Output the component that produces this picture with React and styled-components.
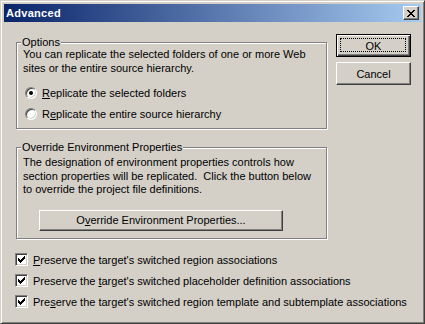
import React from "react";
import styled, { createGlobalStyle, css } from "styled-components";

const Global = createGlobalStyle`
  html, body { margin: 0; padding: 0; background: #d4d0c8; }
  body { font-family: "Liberation Sans", Arial, sans-serif; font-size: 11px; color: #000; }
`;

const Window = styled.div`
  box-sizing: border-box;
  width: 425px;
  height: 324px;
  background: #d4d0c8;
  border: 1px solid;
  border-color: #d4d0c8 #404040 #404040 #d4d0c8;
  box-shadow: inset 1px 1px #fff, inset -1px -1px #808080;
  padding: 3px;
  display: flex;
  flex-direction: column;
`;

const TitleBar = styled.div`
  height: 18px;
  display: flex;
  align-items: center;
  padding-left: 2px;
  background: linear-gradient(to right, #0a246a, #a6caf0);
`;

const Title = styled.span`
  flex: 1;
  color: #fff;
  font-weight: bold;
  font-size: 11px;
  letter-spacing: 0.3px;
`;

const bevel = css`
  background: #d4d0c8;
  border: 1px solid;
  border-color: #fff #404040 #404040 #fff;
  box-shadow: inset -1px -1px #808080;
`;

const CloseButton = styled.div`
  ${bevel};
  box-sizing: border-box;
  width: 16px;
  height: 14px;
  margin-right: 2px;
  display: flex;
  align-items: center;
  justify-content: center;
  padding-right: 1px;
`;

const Content = styled.div`
  flex: 1;
  display: flex;
  gap: 9px;
  padding: 12px 10px 0 11px;
`;

const LeftColumn = styled.div`
  width: 312px;
  display: flex;
  flex-direction: column;
`;

const RightColumn = styled.div`
  width: 75px;
  display: flex;
  flex-direction: column;
  gap: 5px;
`;

const Group = styled.div`
  position: relative;
  box-sizing: border-box;
  margin-left: 1px;
  margin-top: ${(p) => p.$top}px;
  height: ${(p) => p.$height}px;
  border: 1px solid #808080;
  box-shadow: inset 1px 1px #fff, 1px 1px #fff;
  padding: ${(p) => p.$padTop}px 6px 0 6px;
`;

const Legend = styled.span`
  position: absolute;
  top: -7px;
  left: 4px;
  padding: 0 1px;
  line-height: 13px;
  background: #d4d0c8;
`;

const Para = styled.div`
  line-height: 13.5px;
  white-space: nowrap;
`;

const RadioList = styled.div`
  margin-top: 7px;
  margin-left: 2px;
`;

const OptionRow = styled.label`
  height: 21px;
  display: flex;
  align-items: center;
  gap: 5px;
  white-space: nowrap;
`;

const Radio = styled.span`
  position: relative;
  box-sizing: border-box;
  width: 12px;
  height: 12px;
  border-radius: 50%;
  background: #fff;
  border: 1px solid;
  border-color: #808080 #fff #fff #808080;
  box-shadow: inset 1px 1px #404040, inset -1px -1px #d4d0c8;
  ${(p) =>
    p.$checked &&
    css`
      &::after {
        content: "";
        position: absolute;
        left: 3px;
        top: 3px;
        width: 4px;
        height: 4px;
        border-radius: 50%;
        background: #000;
      }
    `}
`;

const CheckList = styled.div`
  margin-top: 10px;
`;

const CheckBox = styled.span`
  flex: none;
  box-sizing: border-box;
  width: 13px;
  height: 13px;
  background: #fff;
  border: 1px solid;
  border-color: #808080 #fff #fff #808080;
  box-shadow: inset 1px 1px #404040, inset -1px -1px #d4d0c8;
  display: flex;
  align-items: center;
  justify-content: center;
`;

const PushButton = styled.button`
  ${bevel};
  box-sizing: border-box;
  font: inherit;
  color: #000;
  width: ${(p) => p.$width}px;
  height: ${(p) => p.$height}px;
  padding: 0;
  display: flex;
  align-items: center;
  justify-content: center;
  ${(p) =>
    p.$default &&
    css`
      position: relative;
      border: 1px solid #000;
      box-shadow: inset 1px 1px #fff, inset -1px -1px #404040,
        inset -2px -2px #808080;
      &::after {
        content: "";
        position: absolute;
        inset: 3px 4px 4px 3px;
        border: 1px dotted #000;
      }
    `}
`;

const EnvButton = styled(PushButton)`
  margin-left: 16px;
  margin-top: 13px;
`;

const CheckMark = () => (
  <svg width="7" height="7" viewBox="0 0 7 7" shapeRendering="crispEdges">
    <path
      fill="#000"
      d="M6 0h1v1H6z M5 1h2v1H5z M0 2h1v1H0z M4 2h3v1H4z M0 3h2v1H0z M3 3h3v1H3z M0 4h5v1H0z M1 5h3v1H1z M2 6h1v1H2z"
    />
  </svg>
);

const CloseGlyph = () => (
  <svg width="8" height="7" viewBox="0 0 8 7" shapeRendering="crispEdges">
    <path
      fill="#000"
      d="M0 0h2v1H0z M6 0h2v1H6z M1 1h2v1H1z M5 1h2v1H5z M2 2h4v1H2z M3 3h2v1H3z M2 4h4v1H2z M1 5h2v1H1z M5 5h2v1H5z M0 6h2v1H0z M6 6h2v1H6z"
    />
  </svg>
);

const checks = [
  { pre: "", key: "P", post: "reserve the target's switched region associations" },
  { pre: "Preserve the ", key: "t", post: "arget's switched placeholder definition associations" },
  { pre: "Pre", key: "s", post: "erve the target's switched region template and subtemplate associations" },
];

export default function App() {
  return (
    <>
      <Global />
      <Window>
        <TitleBar>
          <Title>Advanced</Title>
          <CloseButton>
            <CloseGlyph />
          </CloseButton>
        </TitleBar>
        <Content>
          <LeftColumn>
            <Group $top={8} $height={87} $padTop={5}>
              <Legend>Options</Legend>
              <Para>
                You can replicate the selected folders of one or more Web
                <br />
                sites or the entire source hierarchy.
              </Para>
              <RadioList>
                <OptionRow>
                  <Radio $checked />
                  <span>
                    <u>R</u>eplicate the selected folders
                  </span>
                </OptionRow>
                <OptionRow>
                  <Radio />
                  <span>
                    R<u>e</u>plicate the entire source hierarchy
                  </span>
                </OptionRow>
              </RadioList>
            </Group>

            <Group $top={18} $height={92} $padTop={8}>
              <Legend>Override Environment Properties</Legend>
              <Para>
                The designation of environment properties controls how
                <br />
                section properties will be replicated.&nbsp; Click the button below
                <br />
                to override the project file definitions.
              </Para>
              <EnvButton $width={244} $height={21}>
                O<u>v</u>erride Environment Properties...
              </EnvButton>
            </Group>

            <CheckList>
              {checks.map((c) => (
                <OptionRow key={c.post}>
                  <CheckBox>
                    <CheckMark />
                  </CheckBox>
                  <span>
                    {c.pre}
                    <u>{c.key}</u>
                    {c.post}
                  </span>
                </OptionRow>
              ))}
            </CheckList>
          </LeftColumn>

          <RightColumn>
            <PushButton $default $width={75} $height={23}>
              OK
            </PushButton>
            <PushButton $width={75} $height={23}>
              Cancel
            </PushButton>
          </RightColumn>
        </Content>
      </Window>
    </>
  );
}
